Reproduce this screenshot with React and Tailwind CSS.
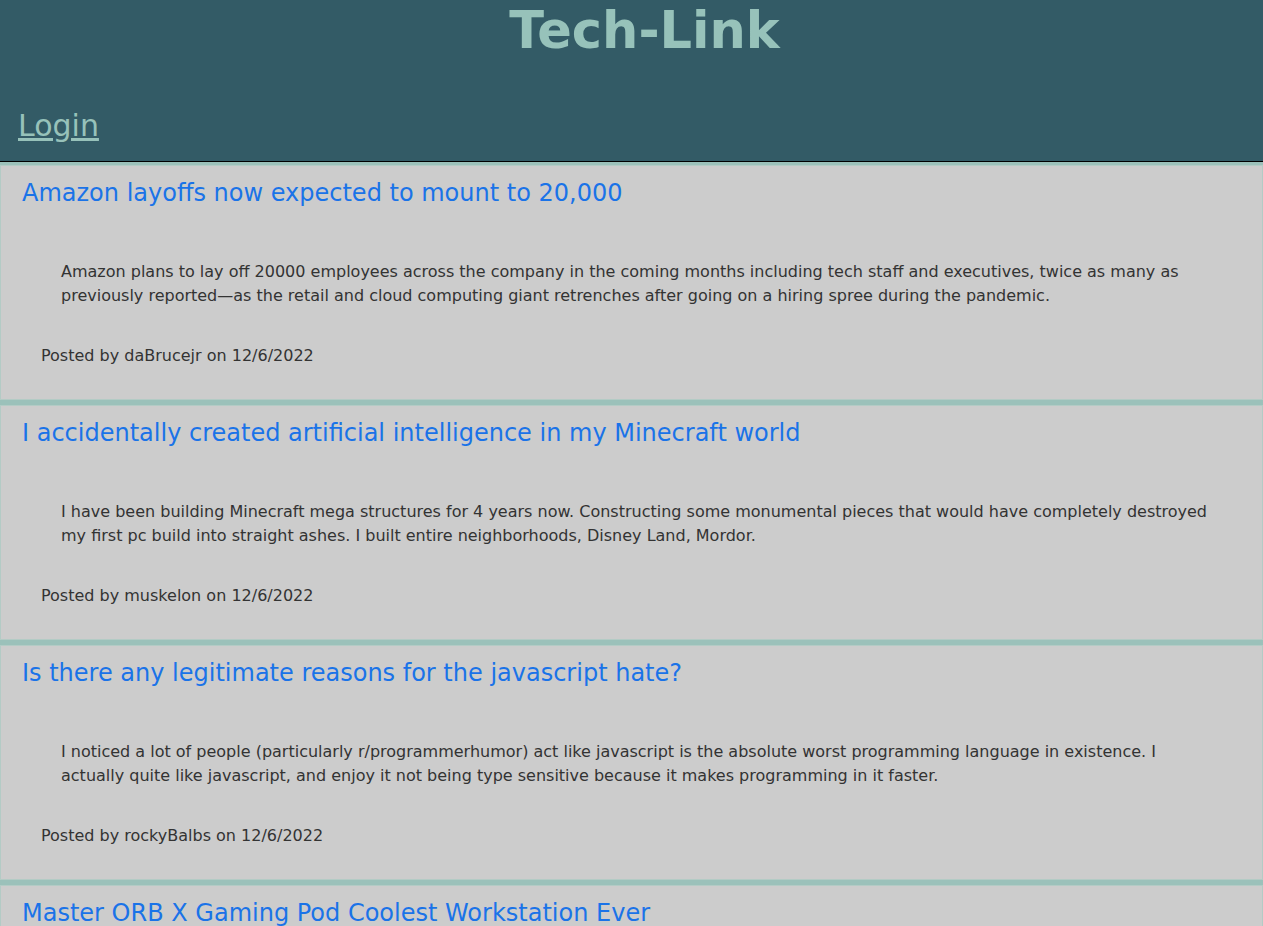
import React from "react";

const posts = [
  {
    id: 1,
    title: "Amazon layoffs now expected to mount to 20,000",
    body: "Amazon plans to lay off 20000 employees across the company in the coming months including tech staff and executives, twice as many as previously reported\u2014as the retail and cloud computing giant retrenches after going on a hiring spree during the pandemic.",
    user: "daBrucejr",
    date: "12/6/2022",
  },
  {
    id: 2,
    title: "I accidentally created artificial intelligence in my Minecraft world",
    body: "I have been building Minecraft mega structures for 4 years now. Constructing some monumental pieces that would have completely destroyed my first pc build into straight ashes. I built entire neighborhoods, Disney Land, Mordor.",
    user: "muskelon",
    date: "12/6/2022",
  },
  {
    id: 3,
    title: "Is there any legitimate reasons for the javascript hate?",
    body: "I noticed a lot of people (particularly r/programmerhumor) act like javascript is the absolute worst programming language in existence. I actually quite like javascript, and enjoy it not being type sensitive because it makes programming in it faster.",
    user: "rockyBalbs",
    date: "12/6/2022",
  },
  {
    id: 4,
    title: "Master ORB X Gaming Pod Coolest Workstation Ever",
    body: "Check out the Master ORB X, a fully enclosed gaming pod with a reclining seat, a triple monitor mount and built-in lighting. Easily the coolest workstation I have ever seen.",
    user: "techGuru",
    date: "12/6/2022",
  },
];

const PostCard = ({ post }) => {
  return (
    <div className="bg-[#cccccc] border border-[#b3cbc5] mb-[5px]">
      <a
        href="#"
        className="block mt-[13px] ml-[21px] text-[24px] leading-[29px] text-[#1a73e8]"
      >
        {post.title}
      </a>
      <p className="mt-[52px] ml-[60px] mr-[41px] text-[16px] leading-[24px] text-[#333333]">
        {post.body}
      </p>
      {/* author line */}
      <p className="mt-[36px] mb-[31px] ml-[40px] text-[16px] leading-[24px] text-[#333333]">
        Posted by {post.user} on {post.date}
      </p>
    </div>
  );
};

const App = () => {
  return (
    <div className="min-h-screen bg-[#9bc1ba] font-['DejaVu_Sans',sans-serif]">
      <header className="bg-[#335b66] pt-[2px] pb-[17px] border-b border-black">
        <h1 className="text-center pl-[26px] text-[51px] leading-[58px] font-bold text-[#97c2ba]">
          Tech-Link
        </h1>
        <nav className="mt-[47px] ml-[18px]">
          <a href="#" className="text-[30px] leading-[37px] text-[#97c2ba] underline">
            Login
          </a>
        </nav>
      </header>
      <main className="pt-[3px]">
        {posts.map((post) => (
          <PostCard key={post.id} post={post} />
        ))}
      </main>
    </div>
  );
};

export default App;
